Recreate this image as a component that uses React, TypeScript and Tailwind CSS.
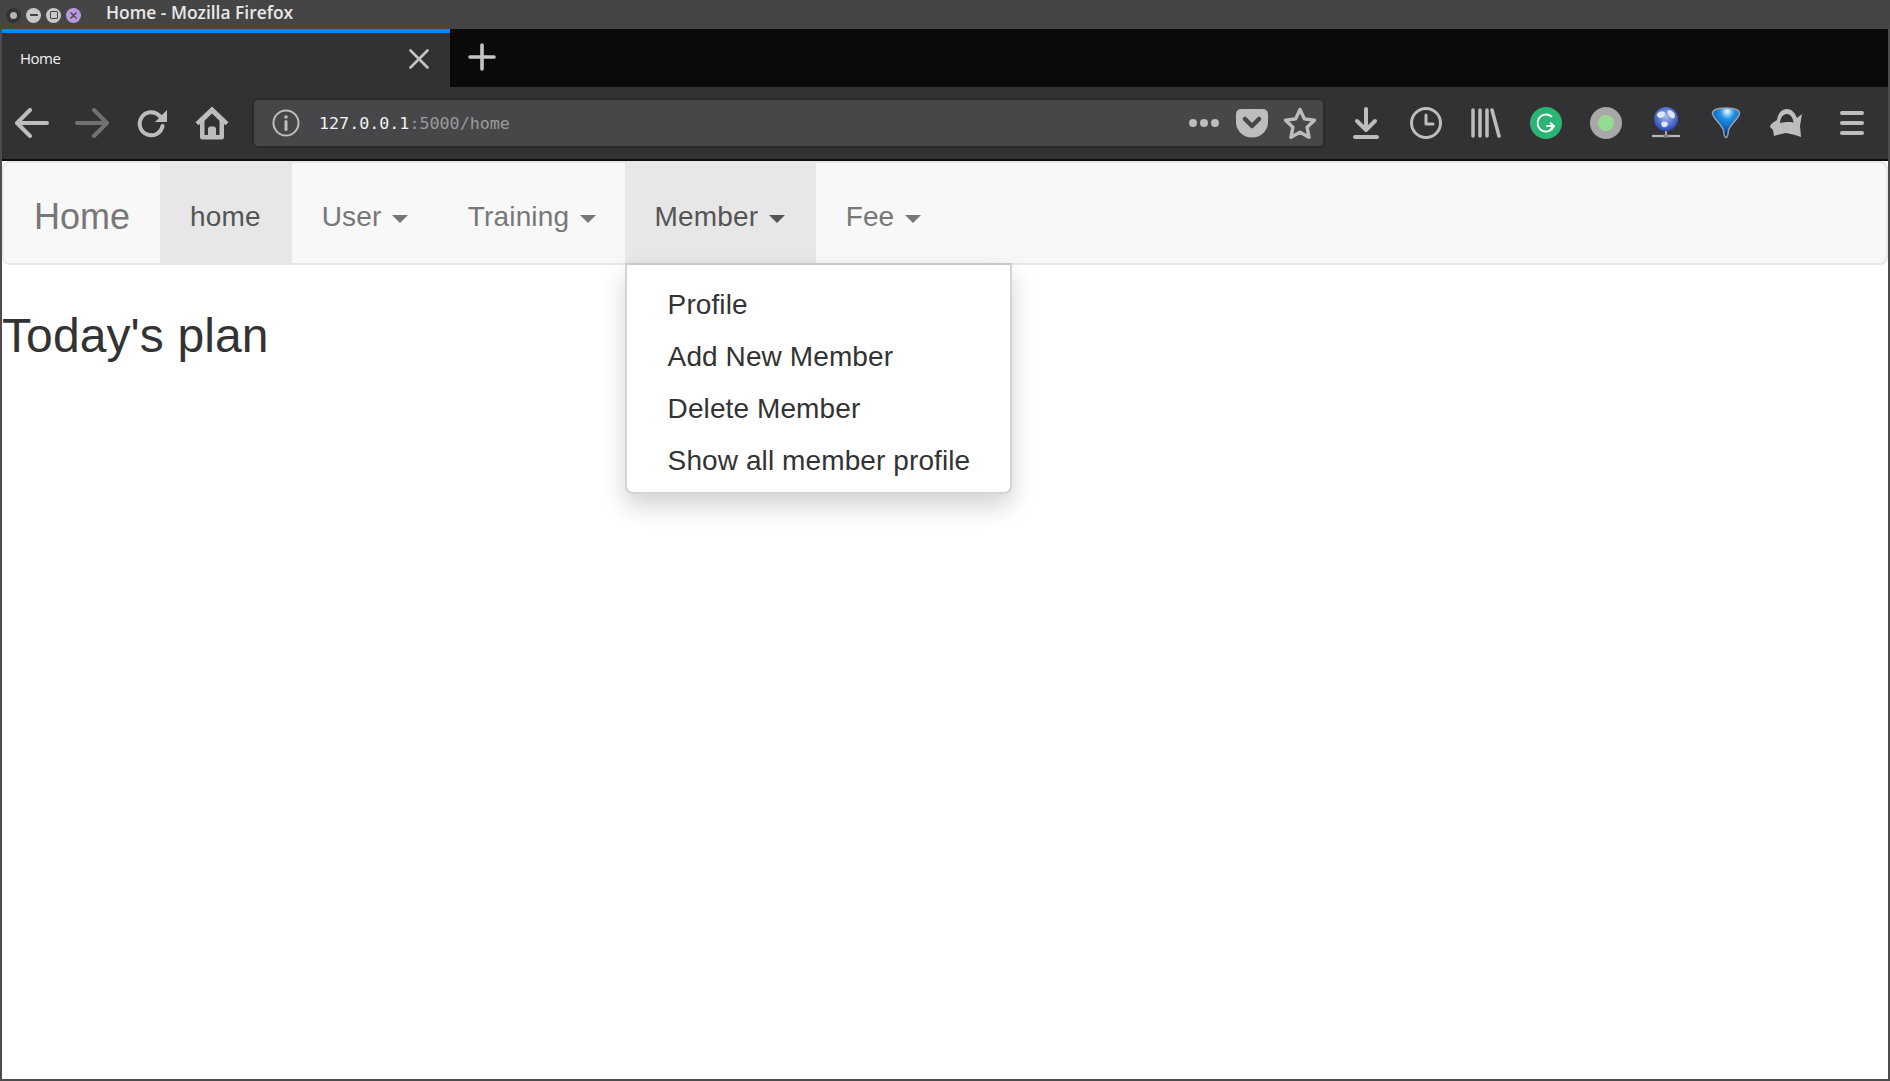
import { ReactNode } from "react";

const sans = "font-['Liberation_Sans',Arial,sans-serif]";

const ToolCell = ({ children }: { children: ReactNode }) => (
    <div className="w-[60px] h-full flex items-center justify-center shrink-0">{children}</div>
);

const Caret = () => (
    <span className="inline-block align-middle w-0 h-0 ml-[2.5px] border-t-8 border-x-8 border-solid border-t-current border-x-transparent" />
);

const NavItem = ({ label, active, caret, pr = "pr-[30px]" }: { label: string; active?: boolean; caret?: boolean; pr?: string }) => (
    <a
        className={`block h-[100px] pl-[30px] pt-[34px] pb-[26px] leading-10 tracking-[0.15px] whitespace-nowrap ${
            active ? "bg-[#e7e7e7] text-[#555]" : "text-[#777]"
        } ${pr}`}
    >
        {label}
        {caret && " "}
        {caret && <Caret />}
    </a>
);

const WindowButtons = () => (
    <div className="flex items-center gap-[5px] w-[106px] pl-[6px] pt-[1px]">
        <span className="w-[15px] h-[15px] rounded-full bg-[#333] flex items-center justify-center">
            <span className="w-[7px] h-[7px] rounded-full bg-[#b4b4b4]" />
        </span>
        <span className="w-[15px] h-[15px] rounded-full bg-[#c8c8c8] flex items-center justify-center">
            <span className="w-[8px] h-[2px] bg-[#444]" />
        </span>
        <span className="w-[15px] h-[15px] rounded-full bg-[#c8c8c8] flex items-center justify-center">
            <span className="w-[8px] h-[8px] border border-[#444] rounded-[1px]" />
        </span>
        <span className="w-[15px] h-[15px] rounded-full bg-[#b79ae0] flex items-center justify-center">
            <svg width="9" height="9" viewBox="0 0 9 9" fill="none" stroke="#444" strokeWidth="1.3">
                <path d="M1.5 1.5l6 6M7.5 1.5l-6 6" />
            </svg>
        </span>
    </div>
);

const stroke = {
    fill: "none",
    stroke: "#bdbdbd",
    strokeWidth: 4,
    strokeLinecap: "round" as const,
    strokeLinejoin: "round" as const,
};

const Toolbar = () => (
    <div className="h-[72px] bg-[#323234] flex items-center shrink-0">
        <ToolCell>
            <svg width="34" height="30" viewBox="0 0 34 30" {...stroke}>
                <path d="M2 15h30M15 2L2 15l13 13" />
            </svg>
        </ToolCell>
        <ToolCell>
            <svg width="34" height="30" viewBox="0 0 34 30" {...stroke} stroke="#707070">
                <path d="M32 15H2M19 2l13 13-13 13" />
            </svg>
        </ToolCell>
        <ToolCell>
            <svg width="32" height="32" viewBox="0 0 32 32">
                <path d="M26.500 19a11.500 11.500 0 1 1-3.300-10.500L26 11" fill="none" stroke="#bdbdbd" strokeWidth="4" strokeLinecap="round" />
                <path d="M31 3v12H19z" fill="#bdbdbd" />
            </svg>
        </ToolCell>
        <ToolCell>
            <svg width="34" height="34" viewBox="0 0 34 34">
                <path
                    fill="#bdbdbd"
                    fillRule="evenodd"
                    d="M17 .5l16.500 15.700-3 3-1.500-1.400V31a2.500 2.500 0 0 1-2.500 2.500h-19A2.500 2.500 0 0 1 5 31V17.800l-1.500 1.400-3-3zM17 7.500L9.500 14.800V29H13v-6a2.500 2.500 0 0 1 2.500-2.500h3A2.500 2.500 0 0 1 21 23v6h3.500V14.800z"
                />
                <rect x="15" y="25" width="4" height="4" fill="#bdbdbd" />
            </svg>
        </ToolCell>
        <div className="w-[1073px] h-[50px] ml-[10px] rounded-[6px] bg-[#474749] border-2 border-[#2a2a2c] flex items-center shrink-0">
            <div className="w-[64px] flex justify-center shrink-0">
                <svg width="28" height="28" viewBox="0 0 28 28" fill="none" stroke="#bdbdbd" strokeWidth="2">
                    <circle cx="14" cy="14" r="12.5" />
                    <path d="M14 12.5v8" strokeWidth="3" strokeLinecap="round" />
                    <circle cx="14" cy="8" r="1.8" fill="#bdbdbd" stroke="none" />
                </svg>
            </div>
            <span className="text-[16.7px] pl-[1px] pt-[2px] font-['DejaVu_Sans_Mono',monospace] text-[#f2f2f2]">
                127.0.0.1<span className="text-[#9a9a9a]">:5000/home</span>
            </span>
            <div className="ml-auto flex items-center h-full">
                <div className="flex gap-[3px] mr-[17px]">
                    <span className="w-[8px] h-[8px] rounded-full bg-[#bdbdbd]" />
                    <span className="w-[8px] h-[8px] rounded-full bg-[#bdbdbd]" />
                    <span className="w-[8px] h-[8px] rounded-full bg-[#bdbdbd]" />
                </div>
                <svg width="32" height="30" viewBox="0 0 32 30" className="mr-[15px]">
                    <path
                        fill="#bdbdbd"
                        d="M5 1h22a5 5 0 0 1 5 5v8a16 15.500 0 0 1-32 0V6a5 5 0 0 1 5-5z"
                    />
                    <path d="M9 11l7 7 7-7" fill="none" stroke="#474749" strokeWidth="4.500" strokeLinecap="round" strokeLinejoin="round" />
                </svg>
                <svg width="34" height="32" viewBox="0 0 34 32" className="mr-[6px]" fill="none" stroke="#bdbdbd" strokeWidth="3.400" strokeLinejoin="round">
                    <path d="M17 2.500l4.400 9.400 10.100 1.300-7.400 7 1.900 10.100-9-5-9 5 1.900-10.100-7.400-7 10.100-1.300z" />
                </svg>
            </div>
        </div>
        <div className="w-[11px] shrink-0" />
        <ToolCell>
            <svg width="26" height="32" viewBox="0 0 26 32" {...stroke}>
                <path d="M13 2v20M4 14l9 9 9-9" />
                <path d="M2 30h22" />
            </svg>
        </ToolCell>
        <ToolCell>
            <svg width="32" height="32" viewBox="0 0 32 32" fill="none" stroke="#bdbdbd" strokeWidth="3" strokeLinecap="round" strokeLinejoin="round">
                <circle cx="16" cy="16" r="14.500" />
                <path d="M16 8v9h7" />
            </svg>
        </ToolCell>
        <ToolCell>
            <svg width="30" height="30" viewBox="0 0 30 30" fill="none" stroke="#bdbdbd" strokeWidth="3.500" strokeLinecap="round">
                <path d="M2 2v26M9 2v26M16 2v26M21 2l7 26" />
            </svg>
        </ToolCell>
        <ToolCell>
            <div className="w-[32px] h-[32px] rounded-full bg-[#2bb475] flex items-center justify-center">
                <svg width="22" height="22" viewBox="0 0 22 22" fill="none" stroke="#fff" strokeWidth="1.800" strokeLinecap="round" strokeLinejoin="round">
                    <path d="M16.500 4.500A8.500 8.500 0 1 0 19 14H12" />
                    <path d="M15.500 17.500l3.500-3.500-3.500-3" />
                </svg>
            </div>
        </ToolCell>
        <ToolCell>
            <div className="w-[32px] h-[32px] rounded-full bg-[#a8a8a8] flex items-center justify-center">
                <span className="w-[16px] h-[16px] rounded-full bg-[#95dc93]" />
            </div>
        </ToolCell>
        <ToolCell>
            <svg width="30" height="32" viewBox="0 0 30 32">
                <defs>
                    <radialGradient id="globe" cx="50%" cy="40%" r="62%">
                        <stop offset="0%" stopColor="#a9bce8" />
                        <stop offset="65%" stopColor="#4a6ccc" />
                        <stop offset="100%" stopColor="#2a3ea8" />
                    </radialGradient>
                </defs>
                <circle cx="15" cy="12" r="12" fill="url(#globe)" />
                <path d="M6 7c3-4 7-3 8-1s-2 5-4 5-5-2-4-4zM17 3c4 0 7 3 7 6s-3 3-5 1-3-5-2-7zM11 15c3-1 6 0 6 2s-3 4-5 3-2-4-1-5z" fill="#dfe6f7" />
                <path d="M15 24v4" stroke="#aaa" strokeWidth="2" />
                <path d="M1 29h28" stroke="#b8b8b8" strokeWidth="2.200" />
                <rect x="12.500" y="27.500" width="5" height="3" fill="#808080" />
            </svg>
        </ToolCell>
        <ToolCell>
            <svg width="30" height="32" viewBox="0 0 30 32">
                <defs>
                    <radialGradient id="gem" cx="55%" cy="12%" r="75%">
                        <stop offset="0%" stopColor="#f4fbff" />
                        <stop offset="35%" stopColor="#1f93e6" />
                        <stop offset="75%" stopColor="#0a62c0" />
                        <stop offset="100%" stopColor="#05357c" />
                    </radialGradient>
                </defs>
                <path
                    d="M15 1c8 0 13.500 1.800 13.500 5.500 0 4-8.500 10.500-11 16.500-.5 3-.5 7.500-2.500 7.500s-2-4.500-2.500-7.500c-2.500-6-11-12.500-11-16.500C1.500 2.800 7 1 15 1z"
                    fill="url(#gem)"
                    stroke="#98a0aa"
                    strokeWidth="1.500"
                />
            </svg>
        </ToolCell>
        <ToolCell>
            <svg width="32" height="32" viewBox="0 0 32 32">
                <path
                    fill="#bdbdbd"
                    fillRule="evenodd"
                    d="M7 13C8 6 12 2 17 2c5 0 8 4 10 9l5-4-2 12 1 11-6-2-9-2-9 2-3 1-1-6-3-3c0-3 4-5 7-7zM10 16C10.500 10.500 13 7 17 7c3.500 0 6 4 6.500 8.500-4.500-.8-9-.6-13.500.5z"
                />
            </svg>
        </ToolCell>
        <div className="w-[72px] flex justify-center shrink-0">
            <div className="flex flex-col gap-[6px] w-[24px]">
                <span className="h-[4px] rounded-[2px] bg-[#bdbdbd]" />
                <span className="h-[4px] rounded-[2px] bg-[#bdbdbd]" />
                <span className="h-[4px] rounded-[2px] bg-[#bdbdbd]" />
            </div>
        </div>
    </div>
);

const memberLinks = ["Profile", "Add New Member", "Delete Member", "Show all member profile"];

const Navbar = () => (
    <nav className={`relative h-[104px] bg-[#f8f8f8] border-2 border-[#e7e7e7] rounded-[8px] flex items-start text-[28px] ${sans}`}>
        <a className="block h-[100px] px-[30px] pt-[34px] pb-[26px] text-[36px] leading-10 text-[#777]">Home</a>
        <NavItem label="home" active pr="pr-[31px]" />
        <NavItem label="User" caret />
        <NavItem label="Training" caret pr="pr-[29px]" />
        <div className="relative">
            <NavItem label="Member" active caret pr="pr-[31px]" />
            <div className="absolute left-0 top-[100px] w-[387px] pt-[10px] pb-[9px] bg-white border-2 border-[#d4d4d4] border-t-[#c8c8c8] rounded-b-[8px] shadow-[0_12px_24px_rgba(0,0,0,0.175)] z-10">
                {memberLinks.map((link) => (
                    <a key={link} className="block pl-[41px] pr-[40px] pt-[10px] pb-[2px] leading-10 tracking-[0.1px] text-[#333] whitespace-nowrap">
                        {link}
                    </a>
                ))}
            </div>
        </div>
        <NavItem label="Fee" caret />
    </nav>
);

export default function App() {
    return (
        <div className="w-[1890px] h-[1081px] flex flex-col bg-[#4d4d4d] overflow-hidden">
            {/* title bar */}
            <div className="h-[29px] bg-[#454545] flex items-center shrink-0">
                <WindowButtons />
                <span className="text-[17.4px] pb-[3px] font-semibold text-[#e8e8e8] font-['Open_Sans',sans-serif] leading-none">
                    Home - Mozilla Firefox
                </span>
            </div>

            <div className="flex-1 flex flex-col px-[2px] pb-[2px]">
                {/* tab strip */}
                <div className="h-[58px] bg-[#0a0a0b] flex shrink-0">
                    <div className="w-[448px] bg-[#323234] border-t-4 border-[#0a84ff] flex items-center justify-between pl-[18px] pr-[21px] pb-[2px]">
                        <span className="text-[15px] pb-[2px] text-[#f2f2f2] font-['Open_Sans',sans-serif] tracking-[-0.5px]">Home</span>
                        <svg width="20" height="20" viewBox="0 0 20 20" fill="none" stroke="#c4c4c4" strokeWidth="2.600" strokeLinecap="round">
                            <path d="M1.500 1.500l17 17M18.500 1.500l-17 17" />
                        </svg>
                    </div>
                    <div className="w-[64px] flex items-center justify-center pb-[2px]">
                        <svg width="28" height="28" viewBox="0 0 28 28" fill="none" stroke="#c4c4c4" strokeWidth="3.600" strokeLinecap="round">
                            <path d="M14 2v24M2 14h24" />
                        </svg>
                    </div>
                </div>

                <Toolbar />
                <div className="h-[2px] bg-[#0c0c0c] shrink-0" />

                {/* page */}
                <div className={`flex-1 bg-white ${sans}`}>
                    <Navbar />
                    <h3 className="mt-[45px] text-[48px] leading-[1.1] tracking-[0.1px] text-[#333]">Today's plan</h3>
                </div>
            </div>
        </div>
    );
}
